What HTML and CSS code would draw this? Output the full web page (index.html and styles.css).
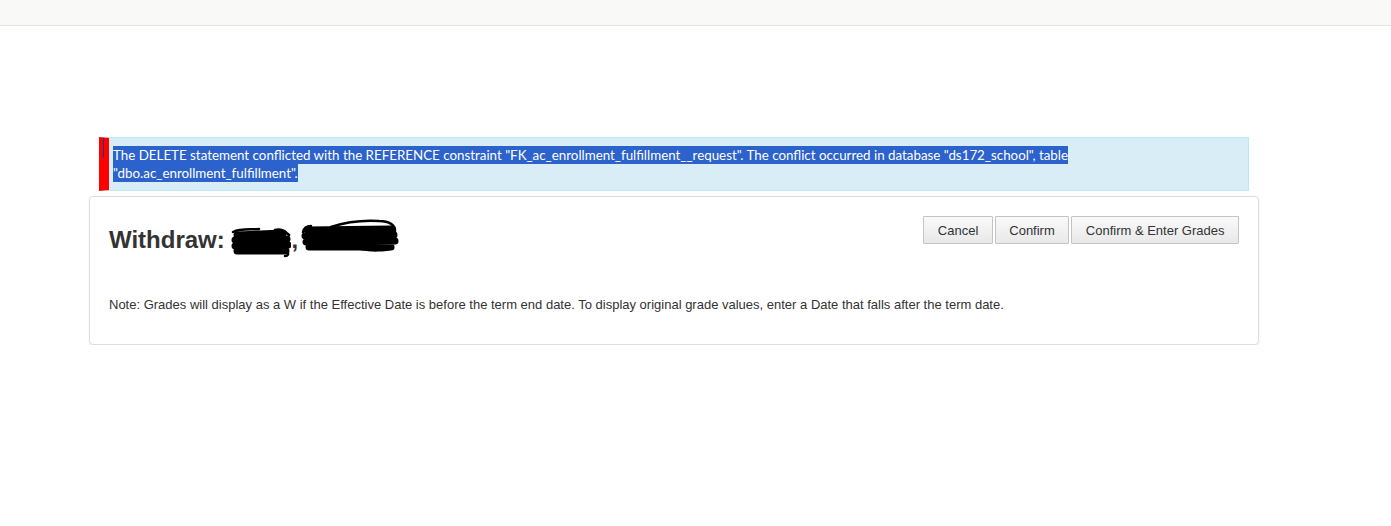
FILE: index.html
```html
<!DOCTYPE html>
<html lang="en">
<head>
    <meta charset="UTF-8">
    <meta name="viewport" content="width=device-width, initial-scale=1.0">
    <title>Withdraw</title>
    <link rel="stylesheet" href="styles.css">
</head>
<body>
    <div class="topbar"></div>

    <div class="page">
        <div class="alert">
            <span class="selected">The DELETE statement conflicted with the REFERENCE constraint "FK_ac_enrollment_fulfillment__request". The conflict occurred in database "ds172_school", table "dbo.ac_enrollment_fulfillment".</span>
        </div>

        <div class="card">
            <div class="card-header">
                <h2 class="title">Withdraw: <svg class="scribble first" width="60" height="32" viewBox="0 0 60 32">
                        <g fill="none" stroke="#000" stroke-linecap="round" stroke-linejoin="round">
                            <path stroke-width="7" d="M6,9 L52,7 M4,14 L56,13 M4,20 L57,19 M6,25 L55,25"/>
                            <path stroke-width="2.5" d="M2,6 C10,2 20,4 28,3 M44,4 C50,2 54,5 58,9 M56,26 C58,28 57,30 54,30"/>
                        </g>
                    </svg>, <svg class="scribble second" width="98" height="34" viewBox="0 0 98 34">
                        <g fill="none" stroke="#000" stroke-linecap="round" stroke-linejoin="round">
                            <path stroke-width="7" d="M6,12 L90,11 M4,18 L93,17 M5,24 L94,23 M8,29 L90,29"/>
                            <path stroke-width="2.5" d="M30,9 C45,4 62,2 78,3 C88,3 95,7 94,14 M2,14 C3,10 6,8 10,8 M60,31 C70,33 84,33 92,30"/>
                        </g>
                    </svg>
                </h2>
                <div class="actions">
                    <button class="btn">Cancel</button>
                    <button class="btn">Confirm</button>
                    <button class="btn">Confirm &amp; Enter Grades</button>
                </div>
            </div>
            <p class="note">Note: Grades will display as a W if the Effective Date is before the term end date. To display original grade values, enter a Date that falls after the term date.</p>
        </div>
    </div>
</body>
</html>
```

FILE: styles.css
```css
body {
    margin: 0;
    font-family: "Liberation Sans", Arial, sans-serif;
    color: #333;
    background: #fff;
}
.topbar {
    height: 25px;
    background-color: #f9f9f7;
    border-bottom: 1px solid #e4e4e2;
}
.page {
    width: 1170px;
    margin: 111px 0 0 89px;
}
.alert {
    position: relative;
    margin: 0 10px;
    padding: 8px 4px;
    background-color: #d9edf7;
    border: 1px solid #bce8f1;
    border-left: 10px solid #f00;
    font-family: Lato, "Open Sans", sans-serif;
    font-size: 13.35px;
    line-height: 18px;
}
.alert::before {
    content: "";
    position: absolute;
    left: -6px;
    top: 0;
    width: 1px;
    height: 20px;
    background-color: #23348a;
}
.selected {
    background-color: #2c62cc;
    color: #fff;
    padding: 1px 0;
}
.card {
    margin-top: 5px;
    padding: 19px;
    border: 1px solid #ddd;
    border-radius: 4px;
    box-shadow: 0 1px 2px rgba(0, 0, 0, 0.08);
}
.card-header {
    display: flex;
    justify-content: space-between;
    align-items: flex-start;
}
.title {
    margin: 10px 0 0;
    font-size: 24px;
    line-height: 28px;
    font-weight: bold;
    color: #333;
}
.scribble {
    display: inline-block;
    margin-top: -12px;
    margin-bottom: -12px;
}
.scribble.first {
    vertical-align: 2px;
    margin-left: 0;
}
.scribble.second {
    vertical-align: 8px;
    margin-left: -4px;
}
.actions {
    display: flex;
    gap: 2px;
}
.btn {
    height: 28px;
    padding: 0 13.5px;
    font-family: "Liberation Sans", Arial, sans-serif;
    font-size: 13px;
    color: #333;
    background: linear-gradient(#fafafa, #e8e8e8);
    border: 1px solid #c4c4c4;
    border-radius: 1px;
    cursor: pointer;
}
.btn:hover {
    background: #e6e6e6;
}
.note {
    margin: 42px 0 11px;
    font-size: 13px;
    line-height: 18px;
}
```
